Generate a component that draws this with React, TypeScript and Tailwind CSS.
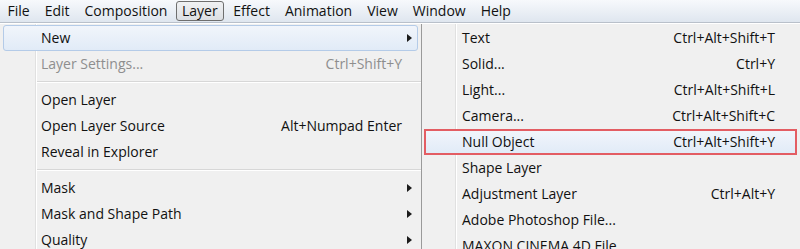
import React from 'react';

type Item =
  | { kind: 'sep' }
  | { kind: 'item'; label: string; shortcut?: string; sub?: boolean; disabled?: boolean; hot?: boolean; boxed?: boolean };

const menuBar = ['File', 'Edit', 'Composition', 'Layer', 'Effect', 'Animation', 'View', 'Window', 'Help'];

const layerMenu: Item[] = [
  { kind: 'item', label: 'New', sub: true, hot: true },
  { kind: 'item', label: 'Layer Settings...', shortcut: 'Ctrl+Shift+Y', disabled: true },
  { kind: 'sep' },
  { kind: 'item', label: 'Open Layer' },
  { kind: 'item', label: 'Open Layer Source', shortcut: 'Alt+Numpad Enter' },
  { kind: 'item', label: 'Reveal in Explorer' },
  { kind: 'sep' },
  { kind: 'item', label: 'Mask', sub: true },
  { kind: 'item', label: 'Mask and Shape Path', sub: true },
  { kind: 'item', label: 'Quality', sub: true },
];

const newMenu: Item[] = [
  { kind: 'item', label: 'Text', shortcut: 'Ctrl+Alt+Shift+T' },
  { kind: 'item', label: 'Solid...', shortcut: 'Ctrl+Y' },
  { kind: 'item', label: 'Light...', shortcut: 'Ctrl+Alt+Shift+L' },
  { kind: 'item', label: 'Camera...', shortcut: 'Ctrl+Alt+Shift+C' },
  { kind: 'item', label: 'Null Object', shortcut: 'Ctrl+Alt+Shift+Y', hot: true, boxed: true },
  { kind: 'item', label: 'Shape Layer' },
  { kind: 'item', label: 'Adjustment Layer', shortcut: 'Ctrl+Alt+Y' },
  { kind: 'item', label: 'Adobe Photoshop File...' },
  { kind: 'item', label: 'MAXON CINEMA 4D File...' },
];

const Arrow = () => (
  <svg width="5" height="8" viewBox="0 0 5 8" className="shrink-0">
    <path d="M0 0 L5 4 L0 8 Z" fill="#1b1b1b" />
  </svg>
);

const MenuRows: React.FC<{ items: Item[]; padRight: string; inset: string }> = ({ items, padRight, inset }) => (
  <>
    {items.map((it, i) =>
      it.kind === 'sep' ? (
        <div key={i} className="h-[10px] flex flex-col justify-center pl-[36px]">
          <div className="h-px bg-[#d7d7d7]" />
          <div className="h-px bg-white" />
        </div>
      ) : (
        <div key={i} className={`relative h-[26px] ${inset}`}>
          {it.hot && (
            <div
              className={`absolute inset-0 bg-gradient-to-b from-[#f1f5fb] to-[#e1ebf7] ${
                it.boxed ? 'border-2 border-[#e35d63]' : 'rounded-[3px] border border-[#b4cbe8]'
              }`}
            />
          )}
          <div
            className={`relative h-full flex items-center pl-[38px] ${padRight} ${
              it.disabled ? 'text-[#8e8e8e]' : 'text-[#111]'
            }`}
          >
            <span className="flex-1 whitespace-nowrap">{it.label}</span>
            {it.shortcut && <span className="whitespace-nowrap">{it.shortcut}</span>}
            {it.sub && <span className="ml-auto mr-[-10px] flex"><Arrow /></span>}
          </div>
        </div>
      )
    )}
  </>
);

export default function App() {
  return (
    <div
      className="w-[800px] h-[249px] overflow-hidden bg-[#f0f0f0] text-[14px] leading-none"
      style={{ fontFamily: '"Open Sans", "Noto Sans", Arial, sans-serif' }}
    >
      {/* menu bar */}
      <div className="h-[23px] flex items-center bg-gradient-to-b from-[#f7f9fc] to-[#dfe6ef] border-b border-[#b9c0ca]">
        {menuBar.map(m => (
          <div
            key={m}
            className={`h-[20px] flex items-center text-[#111] ${
              m === 'Layer'
                ? 'px-[5px] ml-px mr-[2px] border border-[#6f6f6f] rounded-[3px] bg-gradient-to-b from-[#f0f1f3] to-[#dcdfe3]'
                : 'px-[7.5px]'
            }`}
          >
            {m}
          </div>
        ))}
      </div>
      <div className="h-px bg-white" />

      <div className="flex">
        {/* Layer menu */}
        <div className="relative w-[422px] shrink-0 border-r border-[#9a9a9a] pt-px">
          <div className="absolute top-0 bottom-0 left-[35px] w-px bg-[#e0e0e0]" />
          <div className="absolute top-0 bottom-0 left-[36px] w-px bg-white" />
          <MenuRows items={layerMenu} padRight="pr-[16px]" inset="mx-[3px]" />
        </div>

        {/* New submenu */}
        <div className="relative flex-1 pt-px">
          <div className="absolute top-0 bottom-0 left-[33px] w-px bg-[#e0e0e0]" />
          <div className="absolute top-0 bottom-0 left-[34px] w-px bg-white" />
          <MenuRows items={newMenu} padRight="pr-[22px]" inset="ml-[2px] mr-[3px]" />
        </div>
      </div>
    </div>
  );
}
